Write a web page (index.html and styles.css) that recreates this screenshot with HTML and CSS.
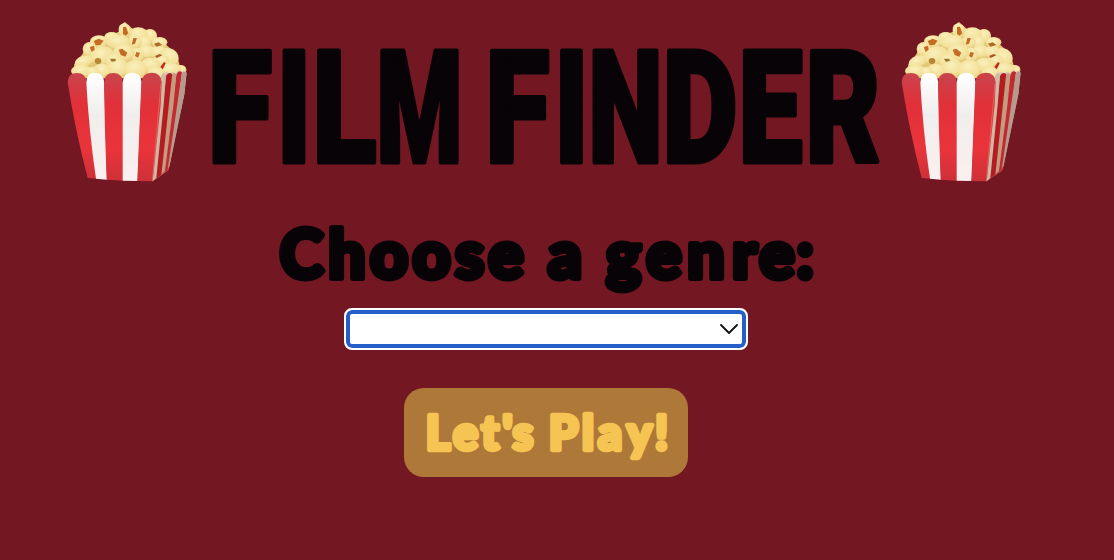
FILE: index.html
```html
<!DOCTYPE html>
<html lang="en">
<head>
<meta charset="utf-8">
<title>Film Finder</title>
<link rel="stylesheet" href="styles.css">
</head>
<body>
<header class="header">
  <svg class="popcorn" viewBox="0 0 435 525" aria-hidden="true">
    <defs>
      <radialGradient id="kernel" cx=".45" cy=".35" r=".75">
        <stop offset="0" stop-color="#faf0bd"/><stop offset=".65" stop-color="#f3e19a"/><stop offset="1" stop-color="#e3c878"/>
      </radialGradient>
      <linearGradient id="red" x1="0" y1="0" x2="0" y2="1">
        <stop offset="0" stop-color="#c9444c"/><stop offset=".3" stop-color="#e23038"/><stop offset=".7" stop-color="#ea343b"/><stop offset="1" stop-color="#cf3038"/>
      </linearGradient>
      <linearGradient id="white" x1="0" y1="0" x2="0" y2="1">
        <stop offset="0" stop-color="#fff"/><stop offset=".4" stop-color="#f0eeec"/><stop offset="1" stop-color="#fbf0f0"/>
      </linearGradient>
      <linearGradient id="side" x1="0" y1="0" x2="0" y2="1">
        <stop offset="0" stop-color="#d8cbb8"/><stop offset=".5" stop-color="#b99883"/><stop offset="1" stop-color="#d9a17c"/>
      </linearGradient>
      <g id="box">
        <path d="M82 118 96 88 150 66 192 50 205 25 225 35 235 42 272 44 300 50 307 68 334 90 365 117 374 151 394 165 388 190H52L58 148Z" fill="#e3c878"/>
        <g fill="url(#kernel)">
          <ellipse cx="285" cy="62" rx="21" ry="20"/><ellipse cx="250" cy="59" rx="29" ry="22"/>
          <path d="M191 45Q190 29 205 25Q210 18 216 27Q230 34 226 49Q230 65 208 68Q190 63 191 45Z"/>
          <ellipse cx="170" cy="66" rx="22" ry="15"/><ellipse cx="132" cy="79" rx="27" ry="18"/>
          <ellipse cx="314" cy="82" rx="23" ry="16"/><ellipse cx="104" cy="102" rx="21" ry="21"/>
          <ellipse cx="268" cy="82" rx="20" ry="19"/><ellipse cx="240" cy="80" rx="20" ry="20"/>
          <ellipse cx="190" cy="81" rx="36" ry="21"/><ellipse cx="87" cy="139" rx="29" ry="17" transform="rotate(-18 87 139)"/>
          <ellipse cx="274" cy="109" rx="26" ry="19"/><ellipse cx="310" cy="111" rx="27" ry="18"/>
          <ellipse cx="342" cy="126" rx="30" ry="26" transform="rotate(30 342 126)"/>
          <ellipse cx="141" cy="121" rx="36" ry="27" transform="rotate(-12 141 121)"/>
          <ellipse cx="246" cy="119" rx="21" ry="21"/><ellipse cx="207" cy="112" rx="33" ry="25"/>
          <ellipse cx="319" cy="138" rx="23" ry="20"/><ellipse cx="177" cy="137" rx="26" ry="22"/>
          <ellipse cx="287" cy="149" rx="30" ry="21"/><ellipse cx="377" cy="164" rx="17" ry="14"/>
          <ellipse cx="346" cy="163" rx="32" ry="19"/><ellipse cx="142" cy="166" rx="27" ry="20"/>
          <ellipse cx="190" cy="158" rx="30" ry="28"/><ellipse cx="79" cy="168" rx="31" ry="18"/>
          <ellipse cx="112" cy="171" rx="20" ry="15"/><ellipse cx="241" cy="163" rx="34" ry="29"/>
          <ellipse cx="304" cy="173" rx="27" ry="17"/>
        </g>
        <g fill="#c56c22">
          <path d="m204 36 9-1 7 20-8 7-8-5Z"/><path d="m116 78 15-7 15 6-10 13-14 1Z"/>
          <path d="m104 96 13-4 2 12-9 7Z"/><path d="m235 69 11 0-6 17-10 3Z"/>
          <path d="m191 104 11-3 15 12-6 12-14-5Z"/><path d="m244 111 11 2-6 15-9-5Z"/>
          <path d="m297 86 14-4 11 8-18 5Z" fill="#a96b29"/><path d="m300 123 14-6 8 4-17 8Z" fill="#a95724"/>
          <path d="m316 156 11-15 5 4-9 18Z" fill="#bd2c1a"/>
          <ellipse cx="129" cy="138" rx="10" ry="9" fill="#b98537"/><path d="m165 131 16 0 2 7-13 2Z" fill="#9f7428"/>
        </g>
        <path d="M317 191Q322 168 330 175Q336 166 345 176Q353 165 362 175Q371 162 380 171Q389 162 395 174L388 238 340 466 292 499Z" fill="url(#side)"/>
        <path d="M333 182Q341 169 352 178L350 225 327 474 301 493Z" fill="#b51c22"/>
        <path d="M363 182Q371 162 381 172L373 238 341 465 327 474Z" fill="#c32a30"/>
        <path d="M319 185Q326 167 333 181L326 269 304 489 292 499Z" fill="#cdbaa5"/>
        <path d="M351 182Q357 167 364 181L355 272 330 467 319 480Z" fill="#c39b80"/>
        <path d="M380 178Q387 163 394 174L388 238 344 452 338 464Z" fill="#b69a8c"/>
        <path d="M38 202Q39 174 66 174Q92 174 95 202L105 320 126 491 98 489Q62 352 38 202Z" fill="url(#red)"/>
        <path d="M94 203Q93 174 120 174Q147 174 148 203L156 494 123 491Q102 350 94 203Z" fill="url(#white)"/>
        <path d="M147 203Q148 174 175 174Q202 174 204 203V497L155 494Q149 345 147 203Z" fill="url(#red)"/>
        <path d="M203 203Q204 173 231 173Q259 173 260 203L248 498 203 497Z" fill="url(#white)"/>
        <path d="M259 203Q262 173 290 173Q318 173 320 202L317 269 293 499 247 498Z" fill="url(#red)"/>
        <path d="M318 205 292 499" stroke="#e7776f" stroke-width="2"/>
      </g>
    </defs>
    <use href="#box"/>
  </svg>
  <h1 class="title">
    <svg class="title-art" viewBox="200 0 689 180">
      <text class="title-text" y="161.5"><tspan x="208" textLength="64" lengthAdjust="spacingAndGlyphs">F</tspan><tspan x="277" textLength="34" lengthAdjust="spacingAndGlyphs">I</tspan><tspan x="312.5" textLength="64" lengthAdjust="spacingAndGlyphs">L</tspan><tspan x="376.5" textLength="86" lengthAdjust="spacingAndGlyphs">M</tspan> <tspan x="485.5" textLength="64" lengthAdjust="spacingAndGlyphs">F</tspan><tspan x="554.5" textLength="34" lengthAdjust="spacingAndGlyphs">I</tspan><tspan x="588.5" textLength="74" lengthAdjust="spacingAndGlyphs">N</tspan><tspan x="662.5" textLength="75" lengthAdjust="spacingAndGlyphs">D</tspan><tspan x="738.5" textLength="64" lengthAdjust="spacingAndGlyphs">E</tspan><tspan x="805.5" textLength="75" lengthAdjust="spacingAndGlyphs">R</tspan></text>
    </svg>
  </h1>
  <svg class="popcorn" viewBox="0 0 435 525" aria-hidden="true"><use href="#box"/></svg>
</header>
<main class="main">
  <svg class="prompt" viewBox="270 215 552 93" role="img">
    <text class="rounded prompt-text" y="277.5" x="301.5 347 389 431.5 469.5 506 535 565 595 623.5 664 706 744.5 777 805">Choose a genre:</text>
  </svg>
  <div class="select" role="combobox" tabindex="0" aria-label="Genre" aria-expanded="false">
    <svg class="chevron" viewBox="0 0 18 11"><path d="m1 1 8 8 8-8"/></svg>
  </div>
  <button class="play" type="button">
    <svg class="play-art" viewBox="404 388 284 89">
      <text class="rounded play-text" y="449.5" x="438 465.5 490 507.5 523 541 563.5 588 610 639.5 661.5">Let's Play!</text>
    </svg>
  </button>
</main>
</body>
</html>
```
FILE: styles.css
```css
body {
  margin: 0;
  min-height: 560px;
  background: #731822;
  overflow: hidden;
}
.header {
  display: flex;
  align-items: flex-start;
  padding: 15px 0 0 55px;
  height: 200px;
  box-sizing: border-box;
}
.popcorn {
  width: 145px;
  height: 175px;
  flex: none;
}
.title {
  margin: -15px 0 0;
  width: 689px;
  height: 180px;
}
.title-art {
  display: block;
  width: 689px;
  height: 180px;
  overflow: visible;
}
.title-text {
  font: 900 156px Roboto, sans-serif;
  fill: #080307;
  stroke: #080307;
  stroke-width: 5px;
  stroke-linejoin: round;
}
.main {
  display: flex;
  flex-direction: column;
  align-items: center;
  width: 1092px;
  padding-top: 15px;
}
.prompt {
  width: 552px;
  height: 93px;
  overflow: visible;
}
.rounded {
  font-family: Lato, sans-serif;
  font-weight: 900;
  text-anchor: middle;
  stroke-linejoin: round;
}
.prompt-text {
  font-size: 66px;
  fill: #080307;
  stroke: #080307;
  stroke-width: 6px;
}
.select {
  display: flex;
  align-items: center;
  justify-content: flex-end;
  box-sizing: border-box;
  width: 404px;
  height: 42px;
  padding-right: 4px;
  background: #fff;
  border: 2px solid #fff;
  border-radius: 8px;
  box-shadow: inset 0 0 0 4px #245fc9;
  outline: none;
}
.chevron {
  width: 18px;
  height: 11px;
  margin-right: 4px;
  fill: none;
  stroke: #111;
  stroke-width: 1.8;
  stroke-linecap: round;
  stroke-linejoin: round;
}
.play {
  width: 284px;
  height: 89px;
  margin-top: 38px;
  padding: 0;
  border: 0;
  border-radius: 20px;
  background: #ae7938;
}
.play-art {
  display: block;
  width: 284px;
  height: 89px;
  overflow: visible;
}
.play-text {
  font-size: 47px;
  fill: #f5c453;
  stroke: #f5c453;
  stroke-width: 4.5px;
}
```
